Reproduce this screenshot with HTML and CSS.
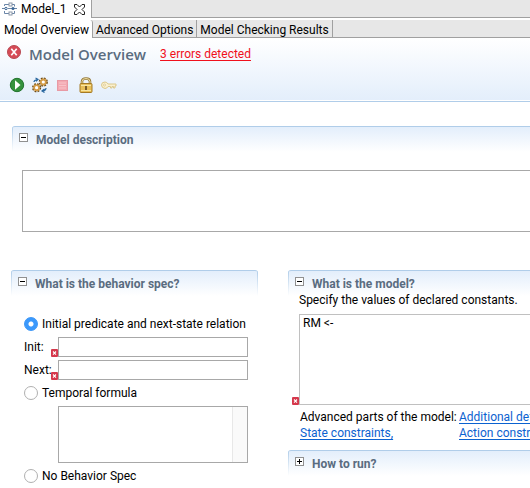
FILE: index.html
```html
<!DOCTYPE html>
<html lang="en">
<head>
<meta charset="utf-8">
<title>Model_1</title>
<link rel="stylesheet" href="styles.css">
</head>
<body>
<svg class="defs" width="0" height="0" aria-hidden="true">
  <symbol id="err" viewBox="0 0 7 8"><rect width="7" height="8" rx="1" fill="#d5384c"/><path d="M2 2.5l3 3.2M5 2.5l-3 3.2" stroke="#fff" stroke-width="1.1"/></symbol>
</svg>
<div class="editor-bar">
  <div class="editor-tab">
    <svg class="file-icon" width="16" height="16" viewBox="0 0 16 16" fill="none" aria-hidden="true">
      <path d="M1 7.500h3M7 7.500h4M13 7.500h3M3.500 5V3.500H8M3.500 10v2.500H8M11 3.500h2.500v2M11 12.500h2.500V10" stroke="#6b86a8"/>
      <rect x="8" y="2" width="3" height="3" fill="#fff" stroke="#8b97a8"/>
      <rect x="8" y="11" width="3" height="3" fill="#fff" stroke="#8b97a8"/>
      <circle cx="5" cy="7.500" r="1.200" fill="#fff" stroke="#3c6796"/><circle cx="12" cy="7.500" r="1.500" fill="#3c6796"/>
    </svg>
    <span>Model_1</span>
    <button class="close" aria-label="Close Model_1"><svg width="11" height="11" viewBox="0 0 11 11" fill="#fff" stroke="#222"><path d="M.5.5h2.500l2.500 2.500L8 .5h2.500V3L8 5.500 10.500 8v2.500H8L5.500 8 3 10.500H.5V8L3 5.500.5 3z"/></svg></button>
  </div>
</div>
<nav class="page-tabs">
  <button class="page-tab active">Model Overview</button>
  <button class="page-tab">Advanced Options</button>
  <button class="page-tab">Model Checking Results</button>
</nav>
<header class="form-head">
  <div class="title-row">
    <svg class="status" width="14" height="14" viewBox="0 0 14 14" aria-hidden="true"><circle cx="7" cy="7" r="6.500" fill="#d64a56" stroke="#b84a52"/><path d="M4.300 3.800l5.400 6.400M9.700 3.800L4.300 10.200" stroke="#fff" stroke-width="1.700"/></svg>
    <h1>Model Overview</h1>
    <a class="errors" href="#errors">3 errors detected</a>
  </div>
  <div class="toolbar">
    <button aria-label="Run"><svg width="16" height="16" viewBox="0 0 16 16"><circle cx="8" cy="8" r="6.700" fill="#35923d" stroke="#23742e"/><path d="M6 3.300L11.500 8 6 12.700z" fill="#fff"/></svg></button>
    <button aria-label="Check model"><svg width="16" height="16" viewBox="0 0 16 16" fill="none"><circle cx="11.300" cy="5" r="3.300" stroke="#6e4c16" stroke-width="2.600" stroke-dasharray="1.600 1"/><circle cx="11.300" cy="5" r="2.500" fill="#fff" stroke="#d39b45" stroke-width="1.800"/><circle cx="4.600" cy="10.700" r="3.300" stroke="#6e4c16" stroke-width="2.600" stroke-dasharray="1.600 1"/><circle cx="4.600" cy="10.700" r="2.500" fill="#fff" stroke="#d39b45" stroke-width="1.800"/><path d="M2 5Q2 3 5.500 2.500M3.500 1l2.500 1.300-2 2M14 11q0 2.500-3.500 3M12.500 12L10 14l2.500 1.500" stroke="#28669e" stroke-width="1.200"/></svg></button>
    <button aria-label="Stop" disabled><svg width="16" height="16" viewBox="0 0 16 16"><rect x="2.500" y="3.500" width="10" height="10" fill="#f3a9b2" stroke="#e89aa5"/><path d="M4 6h7M4 8.500h7M4 11h7" stroke="#f8c3c9"/></svg></button>
    <button aria-label="Lock"><svg width="16" height="16" viewBox="0 0 16 16"><path d="M4 8V4.500Q4 1.500 8 1.500t4 3V8" fill="none" stroke="#94793b" stroke-width="2.600"/><path d="M4 8V4.500Q4 1.500 8 1.500t4 3V8" fill="none" stroke="#f0dfa0"/><rect x="2" y="6.500" width="12" height="9" rx="1" fill="#e8bf59" stroke="#a47a26"/><path d="M3 8.500h10M3 13.500h10" stroke="#f8e5a0"/><path d="M8 9v4" stroke="#5d431b" stroke-width="1.600"/></svg></button>
    <button aria-label="Key" disabled><svg width="16" height="16" viewBox="0 0 16 16"><path d="M7 7h8v2h-1v2h-1.500V9.500H11V11H9.500V9.500H7q-1 2-3 2-3.500-.5-3.500-3.500T4 5q2 0 3 2z" fill="#faf0cf" stroke="#dcc88c"/><circle cx="3.500" cy="8" r="1" fill="#fff" stroke="#d6bd79" stroke-width=".7"/></svg></button>
  </div>
</header>
<main>
  <section class="section bleed">
    <div class="section-head"><button class="twist" aria-label="Collapse"></button><h2 id="d">Model description</h2></div>
    <textarea class="description" aria-labelledby="d"></textarea>
  </section>
  <div class="columns">
    <section class="section">
      <div class="section-head"><button class="twist" aria-label="Collapse"></button><h2>What is the behavior spec?</h2></div>
      <div class="behavior">
        <label class="choice"><input type="radio" name="spec" checked>Initial predicate and next-state relation</label>
        <div class="field"><label for="init">Init:</label><div class="control"><input type="text" id="init"><svg class="mark"><use href="#err"/></svg></div></div>
        <div class="field"><label for="next">Next:</label><div class="control"><input type="text" id="next"><svg class="mark"><use href="#err"/></svg></div></div>
        <label class="choice"><input type="radio" name="spec">Temporal formula</label>
        <textarea class="formula" aria-label="Temporal formula"></textarea>
        <label class="choice"><input type="radio" name="spec">No Behavior Spec</label>
      </div>
    </section>
    <div class="right">
      <section class="section bleed">
        <div class="section-head"><button class="twist" aria-label="Collapse"></button><h2>What is the model?</h2></div>
        <div class="model">
          <label for="constants">Specify the values of declared constants.</label>
          <div class="control"><textarea id="constants" class="constants">RM &lt;-</textarea><svg class="mark"><use href="#err"/></svg></div>
          <div class="advanced">
            <span>Advanced parts of the model:</span><a href="#definitions">Additional definitions,</a>
            <a href="#state">State constraints,</a><a href="#action">Action constraints,</a>
          </div>
        </div>
      </section>
      <section class="section bleed">
        <div class="section-head"><button class="twist plus" aria-label="Expand"></button><h2>How to run?</h2></div>
      </section>
    </div>
  </div>
</main>
</body>
</html>
```
FILE: styles.css
```css
* { box-sizing: border-box; }
body {
  margin: 0;
  background: #fff;
  color: #000;
  font: 12px/16px Roboto, "Liberation Sans", sans-serif;
  font-variant-ligatures: none;
  overflow: hidden;
}
button, input, textarea { font: inherit; color: inherit; }
button { padding: 0; border: 0; background: none; }
svg { display: block; flex: none; }
.defs { position: absolute; }
h1, h2 { margin: 0; color: #5a6c80; font-weight: 700; }

.editor-bar { display: flex; height: 18px; background: #e7e7e7; border-bottom: 1px solid #a0a0a0; }
.editor-tab { display: flex; align-items: center; gap: 4px; height: 18px; padding: 0 6px 0 1px; background: #fff; border-right: 1px solid #a0a0a0; }
.close { margin-left: 3px; }
.page-tabs { display: flex; height: 18px; margin-top: 2px; background: #e7e7e7; border-bottom: 1px solid #a0a0a0; }
.page-tab { padding: 2px 3px 0 4px; border-right: 1px solid #a0a0a0; white-space: nowrap; }
.page-tab.active { height: 18px; background: #fff; border-top-right-radius: 3px; }
.page-tab:not(.active) { padding: 2px 3px 0; }

.form-head { padding: 5px 8px 0 7px; height: 64px; background: linear-gradient(#fff, #e3eefb); border-bottom: 1px solid #b0cde9; box-shadow: inset 0 -1px #fff; }
.title-row { display: flex; align-items: center; gap: 8px; height: 22px; }
.status { align-self: flex-start; margin-top: 2px; }
h1 { font: 600 15px/22px "Open Sans", sans-serif; }
.errors { margin-left: 6px; color: #f0101c; }
.toolbar { display: flex; gap: 7px; margin-top: 12px; padding-left: 2px; }

main { padding: 24px 0 0 12px; }
.section-head {
  display: flex;
  align-items: center;
  gap: 8px;
  height: 26px;
  padding-left: 7px;
  border-top: 1px solid #b0cde9;
  border-radius: 3px 3px 0 0;
  background:
    linear-gradient(#b0cde9, #fff) left / 1px 100% no-repeat,
    linear-gradient(#b0cde9, #fff) right / 1px 100% no-repeat,
    linear-gradient(#e3eefb, #fff);
}
.bleed .section-head {
  border-top-right-radius: 0;
  background:
    linear-gradient(#b0cde9, #fff) left / 1px 100% no-repeat,
    linear-gradient(#e3eefb, #fff);
}
h2 { font-size: 12px; line-height: 16px; }
.twist { width: 9px; height: 9px; margin-bottom: 5px; border: 1px solid #909090; background: linear-gradient(#000, #000) center / 5px 1px no-repeat #fff; }
.twist.plus { background: linear-gradient(#000, #000) center / 5px 1px no-repeat, linear-gradient(#000, #000) center / 1px 5px no-repeat #fff; }
textarea, input[type="text"] { display: block; width: 100%; margin: 0; border: 1px solid #a8a8a8; border-radius: 0; background: #fff; resize: none; outline: 0; }
.bleed textarea { border-right: 0; }
.section > .description { width: calc(100% - 10px); height: 62px; margin: 18px 0 0 10px; }
.columns { display: grid; grid-template-columns: 247px minmax(0, 1fr); gap: 30px; margin: 38px 0 0 -1px; }

.behavior { padding: 20px 10px 0 13px; }
.choice { display: flex; align-items: center; gap: 4px; height: 16px; white-space: nowrap; }
input[type="radio"] { appearance: none; flex: none; width: 14px; height: 14px; margin: 0; border: 1px solid #b0b0b0; border-radius: 50%; background: #fff; }
input[type="radio"]:checked { border-color: #3b96f7; background: radial-gradient(circle, #fff 2px, #3b99fc 3px); }
.field { display: grid; grid-template-columns: 34px 1fr; align-items: center; margin-top: 3px; }
.choice + .field { margin-top: 5px; }
.field input { height: 20px; padding: 0 4px; }
.control { position: relative; }
.mark { position: absolute; left: -7px; bottom: 0; width: 7px; height: 8px; }
.field + .choice { margin-top: 5px; }
.behavior > .formula { width: calc(100% - 34px); height: 57px; margin: 5px 0 5px 34px; background: linear-gradient(90deg, #e8e8e8 1px, #fafafa 1px) right / 15px 100% no-repeat #fff; }

.right { white-space: nowrap; overflow: hidden; }
.model { padding: 0 0 0 11px; margin-top: -4px; }
.model > label { display: block; }
.constants { height: 91px; margin-top: 6px; padding: 0 3px; border-color: #c0c0c0; }
.advanced { display: grid; grid-template-columns: 159px 1fr; margin: 4px 0 9px 1px; }
a { color: #0b62d0; text-underline-offset: 2px; }
```
